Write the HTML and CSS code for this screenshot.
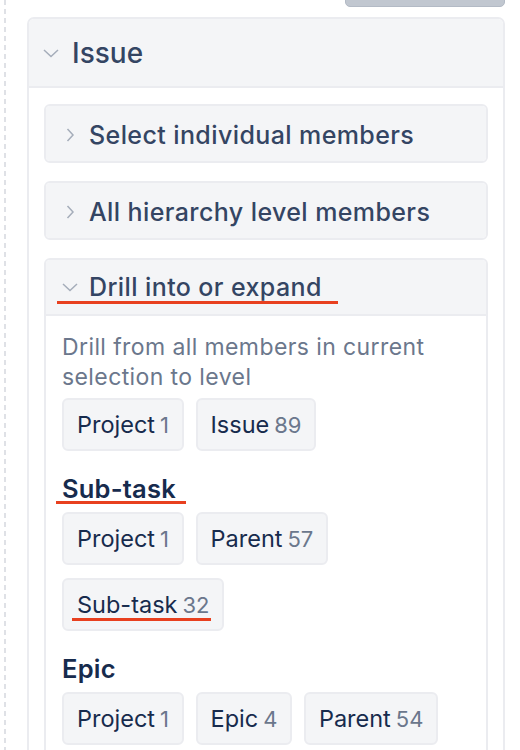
FILE: index.html
```html
<!DOCTYPE html>
<html lang="en">
<head>
<meta charset="utf-8">
<title>Issue drill</title>
<link rel="stylesheet" href="styles.css">
</head>
<body>
<div class="page">
  <div class="rail"></div>
  <div class="main">
    <div class="toolbar"><div class="top-btn"></div></div>
    <section class="panel">
      <header class="panel-head">
        <svg class="chev-down-lg" width="16" height="10" viewBox="0 0 16 10"><path d="M1 2 L8 8.5 L15 2" fill="none" stroke="#a5adba" stroke-width="1.5"/></svg>
        <span class="panel-title">Issue</span>
      </header>
      <div class="panel-body">
        <div class="sect">
          <div class="sect-head">
            <span class="ico"><svg width="16" height="14" viewBox="0 0 16 14"><path d="M5.5 1 L11 7 L5.5 13" fill="none" stroke="#a5adba" stroke-width="1.5"/></svg></span>
            <span class="sect-title">Select individual members</span>
          </div>
        </div>
        <div class="sect">
          <div class="sect-head">
            <span class="ico"><svg width="16" height="14" viewBox="0 0 16 14"><path d="M5.5 1 L11 7 L5.5 13" fill="none" stroke="#a5adba" stroke-width="1.5"/></svg></span>
            <span class="sect-title">All hierarchy level members</span>
          </div>
        </div>
        <div class="sect">
          <div class="sect-head open">
            <span class="ico"><svg width="16" height="10" viewBox="0 0 16 10"><path d="M1 2 L8 8.5 L15 2" fill="none" stroke="#a5adba" stroke-width="1.5"/></svg></span>
            <span class="sect-title">Drill into or expand</span>
            <span class="annot annot-drill"></span>
          </div>
          <div class="sect-body">
            <p class="desc">Drill from all members in current selection to level</p>
            <div class="chips">
              <span class="chip">Project<span class="cnt">1</span></span>
              <span class="chip">Issue<span class="cnt">89</span></span>
            </div>
            <h3 class="level">Sub-task<span class="annot annot-level"></span></h3>
            <div class="chips">
              <span class="chip">Project<span class="cnt">1</span></span>
              <span class="chip">Parent<span class="cnt">57</span></span>
              <span class="chip">Sub-task<span class="cnt">32</span><span class="annot annot-chip"></span></span>
            </div>
            <h3 class="level">Epic</h3>
            <div class="chips">
              <span class="chip">Project<span class="cnt">1</span></span>
              <span class="chip">Epic<span class="cnt">4</span></span>
              <span class="chip">Parent<span class="cnt">54</span></span>
            </div>
          </div>
        </div>
      </div>
    </section>
  </div>
</div>
</body>
</html>
```

FILE: styles.css
```css
* { box-sizing: border-box; }
html, body { margin: 0; padding: 0; background: #fff; }
body {
  font-family: Inter, "Noto Sans", "Liberation Sans", sans-serif;
  color: #172b4d;
  overflow: hidden;
}
.page {
  display: flex;
  padding-left: 4px;
  min-height: 900px;
}
.rail {
  width: 2px;
  flex: none;
  background: repeating-linear-gradient(to bottom, #dfe1e6 0 5px, transparent 5px 9px);
}
.main {
  margin-left: 21px;
  width: 478px;
}
.toolbar {
  display: flex;
  justify-content: flex-end;
}
.top-btn {
  width: 160px;
  height: 30px;
  margin-top: -23px;
  background: #c1c7d0;
  border: 1px solid #b3bac5;
  border-radius: 5px;
}
.panel {
  margin-top: 10px;
  border: 2px solid #ebecf0;
  border-radius: 7px;
  background: #fff;
}
.panel-head {
  display: flex;
  align-items: center;
  height: 69px;
  padding-left: 14px;
  background: #f4f5f7;
  border-bottom: 2px solid #ebecf0;
  border-radius: 5px 5px 0 0;
}
.chev-down-lg { flex: none; }
.panel-title {
  margin-left: 13px;
  font-size: 28px;
  font-weight: 500;
  color: #344563;
  line-height: 34px;
}
.panel-body {
  padding: 16px 15px 20px;
  display: flex;
  flex-direction: column;
  gap: 18px;
}
.sect {
  border: 2px solid #ebecf0;
  border-radius: 6px;
  background: #fff;
}
.sect-head {
  position: relative;
  display: flex;
  align-items: center;
  height: 55px;
  padding: 2px 0 0 16px;
  background: #f4f5f7;
  border-radius: 4px;
}
.sect-head.open {
  border-radius: 4px 4px 0 0;
  border-bottom: 2px solid #ebecf0;
  height: 56px;
  padding-top: 0;
}
.ico {
  width: 16px;
  display: flex;
  align-items: center;
  justify-content: center;
  flex: none;
}
.sect-title {
  margin-left: 11px;
  font-size: 25px;
  letter-spacing: 0.4px;
  font-weight: 500;
  color: #344563;
  line-height: 30px;
}
.sect-body {
  padding: 16px 16px 24px;
}
.desc {
  margin: 0;
  font-size: 23px;
  letter-spacing: 0.4px;
  line-height: 30px;
  color: #6b778c;
}
.chips {
  display: flex;
  flex-wrap: wrap;
  gap: 13px 12px;
  margin-top: 6px;
}
.chip {
  position: relative;
  display: inline-flex;
  align-items: baseline;
  height: 53px;
  padding: 10px 12.5px 10px 13px;
  border: 2px solid #ebecf0;
  border-radius: 6px;
  background: #f4f5f7;
  font-size: 23.5px;
  line-height: 29px;
  color: #172b4d;
}
.cnt {
  margin-left: 5px;
  font-size: 22px;
  color: #6b778c;
}
.level {
  position: relative;
  display: inline-block;
  margin: 22px 0 0;
  font-size: 25.5px;
  font-weight: 600;
  letter-spacing: 0.2px;
  line-height: 32px;
  color: #172b4d;
}
.level + .chips { margin-top: 7px; }
.annot {
  position: absolute;
  height: 3px;
  background: #e8401f;
}
.annot-drill { left: 11px; width: 281px; bottom: 10px; }
.annot-level { left: -6px; width: 130px; bottom: 1px; }
.annot-chip { left: 8px; width: 139px; bottom: 8px; }
```
